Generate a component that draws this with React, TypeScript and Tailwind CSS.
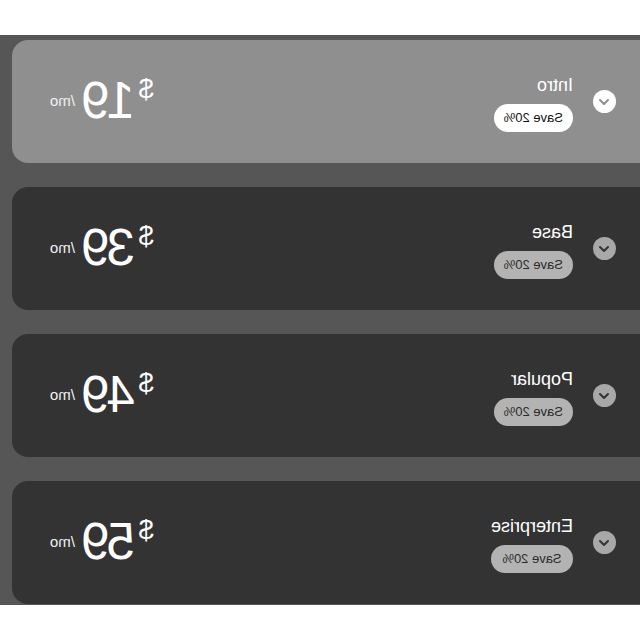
import React from 'react';

const plans = [
  { name: 'Intro', price: '19', active: true },
  { name: 'Base', price: '39', active: false },
  { name: 'Popular', price: '49', active: false },
  { name: 'Enterprise', price: '59', active: false },
];

function Chevron({ active }: { active: boolean }) {
  return (
    <div className={`w-[23px] h-[23px] rounded-full flex items-center justify-center shrink-0 ${active ? 'bg-white' : 'bg-[#a8a8a8]'}`}>
      <svg width="14" height="14" viewBox="0 0 14 14" fill="none">
        <path d="M3 5 L7 9 L11 5" stroke={active ? '#8f8f8f' : '#333333'} strokeWidth="2" strokeLinecap="round" strokeLinejoin="round" />
      </svg>
    </div>
  );
}

export default function App() {
  return (
    <div className="w-[640px] h-[640px] bg-white overflow-hidden -scale-x-100" style={{ fontFamily: '"Liberation Sans", Arial, sans-serif' }}>
      <div className="h-[35px]" />
      <div className="bg-[#565656] pt-[5px] pb-[1px] flex flex-col gap-[24px]">
        {plans.map((p) => (
          <div
            key={p.name}
            className={`-ml-6 mr-[12px] h-[123px] rounded-[16px] flex items-center pl-[48px] pr-[38px] ${p.active ? 'bg-[#8f8f8f]' : 'bg-[#333333]'}`}
          >
            <Chevron active={p.active} />
            <div className="ml-[20px] flex flex-col items-stretch gap-[10px] mt-[4px]">
              <div className="text-[18px] leading-none text-white">{p.name}</div>
              <div
                className={`min-w-[78px] h-[28px] rounded-full flex items-center justify-center px-[10px] text-[13px] ${p.active ? 'bg-white text-[#111]' : 'bg-[#b3b3b3] text-[#2a2a2a]'}`}
              >
                Save 20%
              </div>
            </div>
            <div className="ml-auto flex items-start text-white mb-[2px]">
              <span className="text-[27px] leading-none mt-[1px] mr-[4px]">$</span>
              <span className="text-[51px] leading-none tracking-[-3px]">{p.price}</span>
              <span className="text-[15px] leading-none ml-[9px] mt-[18px] text-[#f0f0f0]">/mo</span>
            </div>
          </div>
        ))}
      </div>
    </div>
  );
}
